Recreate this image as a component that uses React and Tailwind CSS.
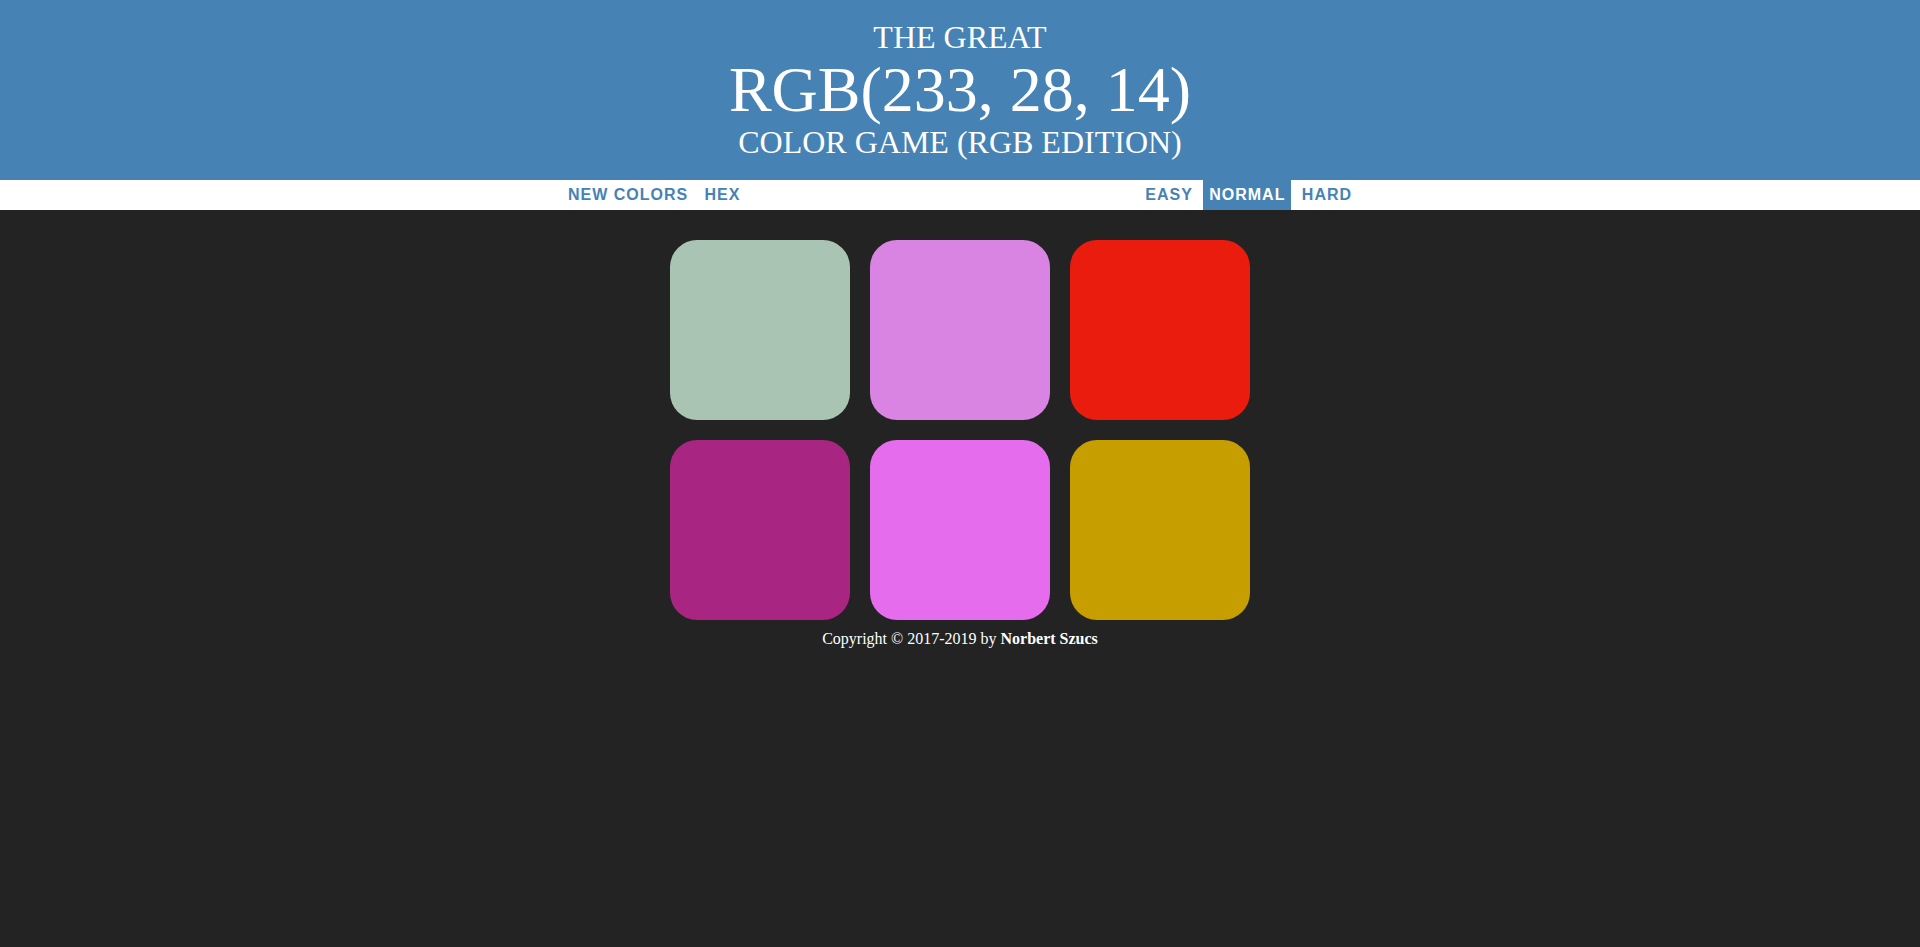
import { useState } from 'react';

const squares = [
  '#a9c4b3',
  '#d984e2',
  '#e91c0e',
  '#a82582',
  '#e56ded',
  '#c69e00',
];

const ModeButton = ({ label, selected, onClick }) => (
  <button
    onClick={onClick}
    className={`h-full px-[6px] uppercase font-bold tracking-[1px] text-[16px] ${
      selected ? 'bg-[#4682b4] text-white' : 'text-[#4682b4]'
    }`}
  >
    {label}
  </button>
);

const App = () => {
  const [mode, setMode] = useState('normal');

  return (
    <div className="min-h-[947px] bg-[#232323] font-['Liberation_Serif',serif]">
      {/* Header */}
      <h1 className="bg-[#4682b4] py-[20px] text-center text-white uppercase font-normal text-[32px]">
        <div className="leading-[35px]">The Great</div>
        <div className="text-[64px] leading-[70px]">RGB(233, 28, 14)</div>
        <div className="leading-[35px]">Color Game (RGB Edition)</div>
      </h1>

      {/* Stripe */}
      <div className="h-[30px] bg-white flex justify-center gap-[4.4px] font-['Liberation_Sans',Arial,sans-serif]">
        <ModeButton label="New Colors" />
        <ModeButton label="Hex" />
        <span className="w-[384px]" />
        <ModeButton label="Easy" selected={mode === 'easy'} onClick={() => setMode('easy')} />
        <ModeButton label="Normal" selected={mode === 'normal'} onClick={() => setMode('normal')} />
        <ModeButton label="Hard" selected={mode === 'hard'} onClick={() => setMode('hard')} />
      </div>

      {/* Squares */}
      <div className="mx-auto mt-[20px] w-[600px] grid grid-cols-3">
        {squares.map((color, i) => (
          <div key={i} className="m-[10px] w-[180px] h-[180px] rounded-[27px]" style={{ backgroundColor: color }} />
        ))}
      </div>

      <p className="text-center text-white text-[16px] leading-[18px]">
        Copyright © 2017-2019 by <b>Norbert Szucs</b>
      </p>
    </div>
  );
};

export default App;
